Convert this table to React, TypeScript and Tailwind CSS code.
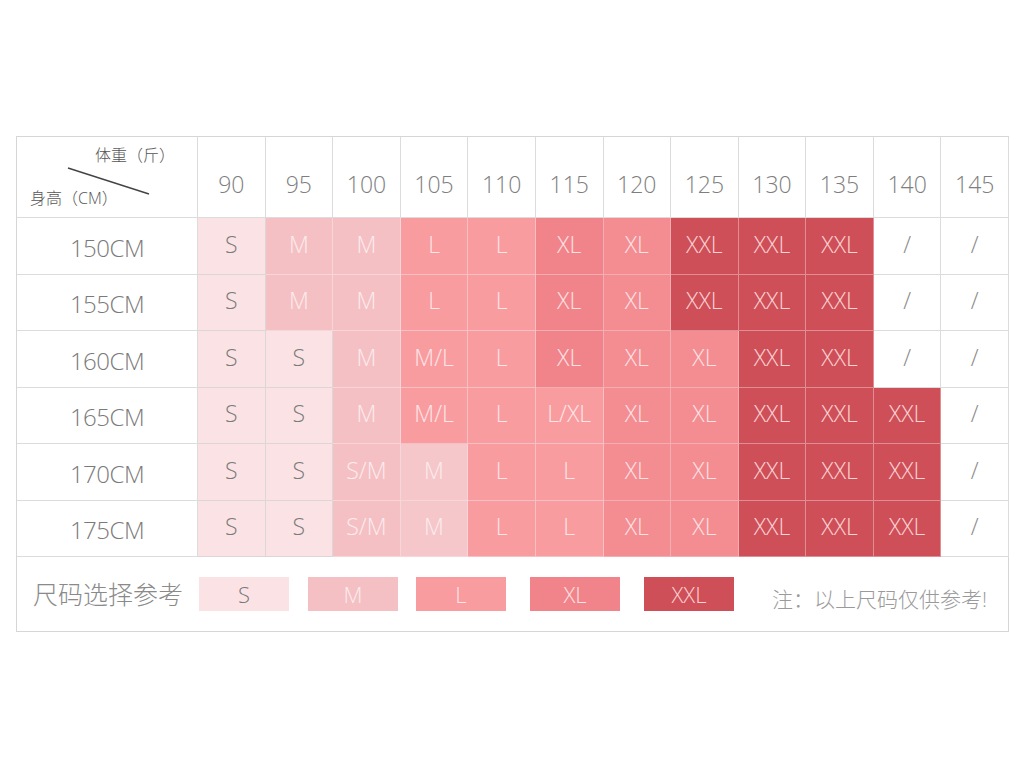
import React from "react";

type K = "S" | "M" | "M2" | "L" | "XL" | "XL2" | "XXL" | "W";

const BG: Record<K, string> = {
  S: "bg-[#fbe3e5] text-[#7a7a7a] border-[#dcd6d6]",
  M: "bg-[#f4c0c4] text-[#fcecee] border-[#f6d6d8]",
  M2: "bg-[#f5c7ca] text-[#fcecee] border-[#f6d6d8]",
  L: "bg-[#f99c9f] text-[#fde6e8] border-[#f8c0c2]",
  XL: "bg-[#f0848a] text-[#fde2e4] border-[#f4aeb1]",
  XL2: "bg-[#f38d92] text-[#fde2e4] border-[#f4aeb1]",
  XXL: "bg-[#cf4f58] text-[#fbd3d5] border-[#e08e93]",
  W: "bg-white text-[#8a8a8a] border-[#dcdcdc]",
};

const weights = ["90", "95", "100", "105", "110", "115", "120", "125", "130", "135", "140", "145"];

const rows: [string, [string, K][]][] = [
  ["150CM", [["S", "S"], ["M", "M"], ["M", "M"], ["L", "L"], ["L", "L"], ["XL", "XL"], ["XL", "XL2"], ["XXL", "XXL"], ["XXL", "XXL"], ["XXL", "XXL"], ["/", "W"], ["/", "W"]]],
  ["155CM", [["S", "S"], ["M", "M"], ["M", "M"], ["L", "L"], ["L", "L"], ["XL", "XL"], ["XL", "XL2"], ["XXL", "XXL"], ["XXL", "XXL"], ["XXL", "XXL"], ["/", "W"], ["/", "W"]]],
  ["160CM", [["S", "S"], ["S", "S"], ["M", "M"], ["M/L", "L"], ["L", "L"], ["XL", "XL"], ["XL", "XL2"], ["XL", "XL2"], ["XXL", "XXL"], ["XXL", "XXL"], ["/", "W"], ["/", "W"]]],
  ["165CM", [["S", "S"], ["S", "S"], ["M", "M"], ["M/L", "L"], ["L", "L"], ["L/XL", "L"], ["XL", "XL2"], ["XL", "XL2"], ["XXL", "XXL"], ["XXL", "XXL"], ["XXL", "XXL"], ["/", "W"]]],
  ["170CM", [["S", "S"], ["S", "S"], ["S/M", "M"], ["M", "M2"], ["L", "L"], ["L", "L"], ["XL", "XL2"], ["XL", "XL2"], ["XXL", "XXL"], ["XXL", "XXL"], ["XXL", "XXL"], ["/", "W"]]],
  ["175CM", [["S", "S"], ["S", "S"], ["S/M", "M"], ["M", "M2"], ["L", "L"], ["L", "L"], ["XL", "XL2"], ["XL", "XL2"], ["XXL", "XXL"], ["XXL", "XXL"], ["XXL", "XXL"], ["/", "W"]]],
];

const legend: [string, string][] = [
  ["S", "bg-[#fbe3e5] text-[#777777]"],
  ["M", "bg-[#f4c0c4] text-[#fcecee]"],
  ["L", "bg-[#f99c9f] text-[#fde6e8]"],
  ["XL", "bg-[#f0848a] text-[#fde2e4]"],
  ["XXL", "bg-[#cf4f58] text-[#fbd3d5]"],
];

export default function App() {
  return (
    <div
      className="min-h-[768px] w-[1024px] bg-white pt-[136px] pl-[16px]"
      style={{ fontFamily: "'Open Sans', 'Noto Sans CJK SC', sans-serif" }}
    >
      <div className="w-[993px] border-l border-t border-[#d6d6d6] grid grid-cols-[181px_repeat(12,1fr)] font-light">
        {/* header */}
        <div className="relative h-[81px] border-r border-b border-[#dcdcdc] bg-white">
          <span className="absolute left-[78px] top-[10px] text-[16px] text-[#555] leading-none">体重（斤）</span>
          <span className="absolute left-[13px] top-[53px] text-[16px] text-[#555] leading-none">身高（CM）</span>
          <svg className="absolute left-0 top-0" width="181" height="81">
            <line x1="51" y1="31" x2="132" y2="57" stroke="#444" strokeWidth="1.4" />
          </svg>
        </div>
        {weights.map((w) => (
          <div
            key={w}
            className="h-[81px] flex items-center justify-center pt-[14px] border-r border-b border-[#dcdcdc] text-[23px] text-[#7e7e7e]"
          >
            {w}
          </div>
        ))}
        {rows.map(([h, cells]) => (
          <React.Fragment key={h}>
            <div className="h-[56.5px] flex items-center justify-center pt-[4px] border-r border-b border-[#dcdcdc] text-[24px] tracking-[-0.5px] text-[#7a7a7a]">
              {h}
            </div>
            {cells.map(([t, k], i) => (
              <div
                key={i}
                className={`h-[56.5px] flex items-center justify-center pb-[4px] border-r border-b text-[23px] ${BG[k]}`}
              >
                {t}
              </div>
            ))}
          </React.Fragment>
        ))}
        <div className="col-span-13 h-[75px] border-r border-b border-[#d6d6d6] flex items-center">
          <span className="ml-[16px] w-[166px] text-[25px] text-[#8a8a8a] leading-none whitespace-nowrap">尺码选择参考</span>
          <div className="flex items-center">
            {legend.map(([t, c], i) => (
              <div
                key={t}
                className={`w-[90px] h-[34px] flex items-center justify-center text-[22px] ${c} ${
                  i === 0 ? "ml-0" : i === 1 ? "ml-[19px]" : i === 2 ? "ml-[18px]" : "ml-[24px]"
                }`}
              >
                {t}
              </div>
            ))}
          </div>
          <span className="ml-[38px] mt-[10px] text-[21px] text-[#9a9a9a] leading-none whitespace-nowrap">注：以上尺码仅供参考!</span>
        </div>
      </div>
    </div>
  );
}
